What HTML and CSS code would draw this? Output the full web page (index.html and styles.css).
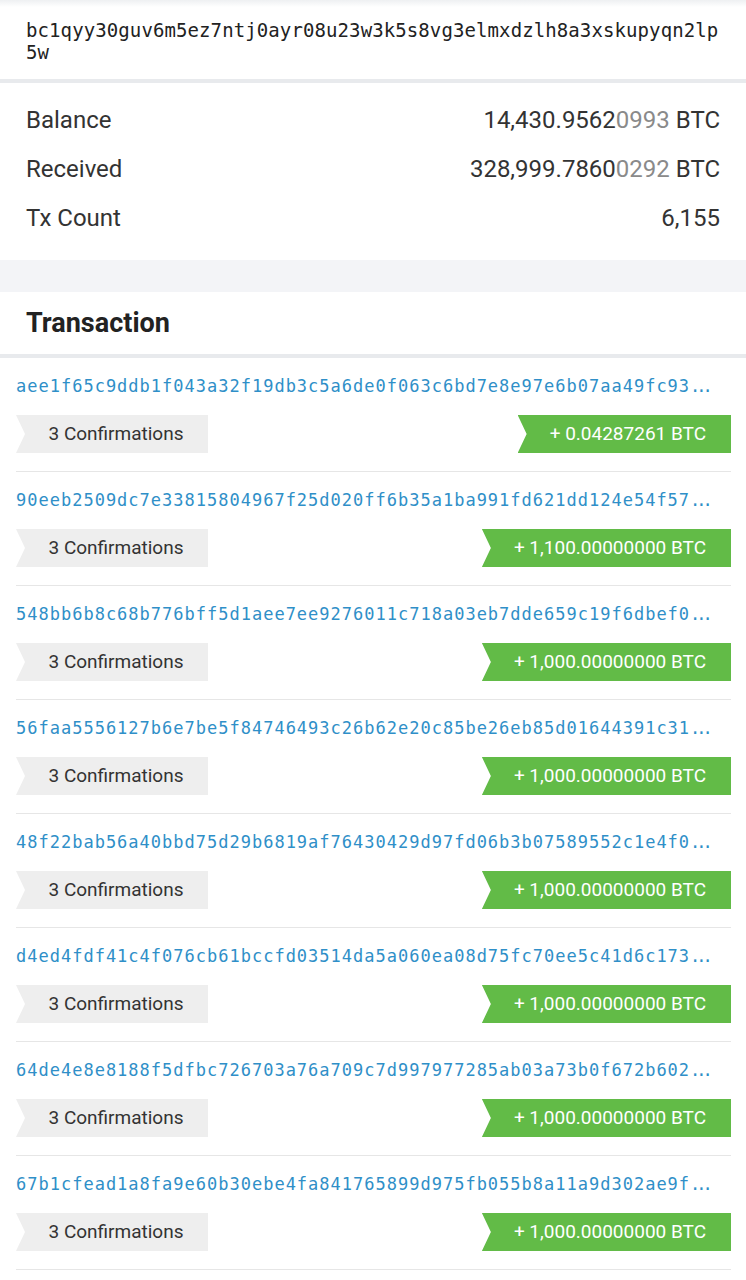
FILE: index.html
```html
<!DOCTYPE html>
<html lang="en">
<head>
  <meta charset="UTF-8">
  <meta name="viewport" content="width=device-width, initial-scale=1.0">
  <title>Address</title>
  <link rel="stylesheet" href="styles.css">
</head>
<body>

  <div class="address-box">
    <div class="address">bc1qyy30guv6m5ez7ntj0ayr08u23w3k5s8vg3elmxdzlh8a3xskupyqn2lp5w</div>
  </div>

  <div class="stats">
    <div class="stat-row">
      <span>Balance</span>
      <span>14,430.9562<span class="faint">0993</span> BTC</span>
    </div>
    <div class="stat-row">
      <span>Received</span>
      <span>328,999.7860<span class="faint">0292</span> BTC</span>
    </div>
    <div class="stat-row">
      <span>Tx Count</span>
      <span>6,155</span>
    </div>
  </div>

  <div class="section-gap"></div>

  <h2 class="section-title">Transaction</h2>

  <ul class="tx-list">
    <li class="tx-item">
      <div class="tx-hash">aee1f65c9ddb1f043a32f19db3c5a6de0f063c6bd7e8e97e6b07aa49fc93<span class="dots">...</span></div>
      <div class="tx-tags">
        <span class="tag tag-conf">3 Confirmations</span>
        <span class="tag tag-amount">+ 0.04287261 BTC</span>
      </div>
    </li>
    <li class="tx-item">
      <div class="tx-hash">90eeb2509dc7e33815804967f25d020ff6b35a1ba991fd621dd124e54f57<span class="dots">...</span></div>
      <div class="tx-tags">
        <span class="tag tag-conf">3 Confirmations</span>
        <span class="tag tag-amount">+ 1,100.00000000 BTC</span>
      </div>
    </li>
    <li class="tx-item">
      <div class="tx-hash">548bb6b8c68b776bff5d1aee7ee9276011c718a03eb7dde659c19f6dbef0<span class="dots">...</span></div>
      <div class="tx-tags">
        <span class="tag tag-conf">3 Confirmations</span>
        <span class="tag tag-amount">+ 1,000.00000000 BTC</span>
      </div>
    </li>
    <li class="tx-item">
      <div class="tx-hash">56faa5556127b6e7be5f84746493c26b62e20c85be26eb85d01644391c31<span class="dots">...</span></div>
      <div class="tx-tags">
        <span class="tag tag-conf">3 Confirmations</span>
        <span class="tag tag-amount">+ 1,000.00000000 BTC</span>
      </div>
    </li>
    <li class="tx-item">
      <div class="tx-hash">48f22bab56a40bbd75d29b6819af76430429d97fd06b3b07589552c1e4f0<span class="dots">...</span></div>
      <div class="tx-tags">
        <span class="tag tag-conf">3 Confirmations</span>
        <span class="tag tag-amount">+ 1,000.00000000 BTC</span>
      </div>
    </li>
    <li class="tx-item">
      <div class="tx-hash">d4ed4fdf41c4f076cb61bccfd03514da5a060ea08d75fc70ee5c41d6c173<span class="dots">...</span></div>
      <div class="tx-tags">
        <span class="tag tag-conf">3 Confirmations</span>
        <span class="tag tag-amount">+ 1,000.00000000 BTC</span>
      </div>
    </li>
    <li class="tx-item">
      <div class="tx-hash">64de4e8e8188f5dfbc726703a76a709c7d997977285ab03a73b0f672b602<span class="dots">...</span></div>
      <div class="tx-tags">
        <span class="tag tag-conf">3 Confirmations</span>
        <span class="tag tag-amount">+ 1,000.00000000 BTC</span>
      </div>
    </li>
    <li class="tx-item">
      <div class="tx-hash">67b1cfead1a8fa9e60b30ebe4fa841765899d975fb055b8a11a9d302ae9f<span class="dots">...</span></div>
      <div class="tx-tags">
        <span class="tag tag-conf">3 Confirmations</span>
        <span class="tag tag-amount">+ 1,000.00000000 BTC</span>
      </div>
    </li>
  </ul>

</body>
</html>
```

FILE: styles.css
```css
body {
  font-family: Roboto, "Liberation Sans", sans-serif;
  background-color: #fff;
  color: #333;
  margin: 0;
  padding: 0;
}

.address-box {
  background: linear-gradient(#eef0f2, #fff 7px);
  padding: 19px 26px 16px;
  border-bottom: 4px solid #e8eaed;
}

.address {
  font-family: "DejaVu Sans Mono", monospace;
  font-size: 19px;
  letter-spacing: 0.1px;
  line-height: 22px;
  color: #222;
  word-break: break-all;
}

.stats {
  padding: 13px 26px 17px;
}

.stat-row {
  display: flex;
  justify-content: space-between;
  font-size: 24px;
  line-height: 49px;
  color: #333;
}

.faint {
  color: #8a8a8a;
}

.section-gap {
  height: 32px;
  background-color: #f3f4f7;
}

.section-title {
  margin: 0;
  padding: 0 26px;
  height: 62px;
  line-height: 62px;
  font-size: 27px;
  font-weight: 700;
  color: #222;
  border-bottom: 4px solid #e8eaed;
}

.tx-list {
  list-style-type: none;
  margin: 0;
  padding: 0 15px 0 16px;
}

.tx-item {
  padding: 16px 0 18px;
  border-bottom: 1px solid #e6e6e6;
}

.tx-hash {
  font-family: "DejaVu Sans Mono", monospace;
  font-size: 17px;
  letter-spacing: 1px;
  line-height: 24px;
  color: #2f8fc8;
  white-space: nowrap;
}

.dots {
  letter-spacing: -4px;
}

.tx-tags {
  display: flex;
  justify-content: space-between;
  margin-top: 17px;
}

.tag {
  height: 38px;
  line-height: 38px;
  font-size: 19px;
  clip-path: polygon(0 0, 100% 0, 100% 100%, 0 100%, 9px 50%);
}

.tag-conf {
  box-sizing: border-box;
  width: 192px;
  padding-left: 8px;
  text-align: center;
  background-color: #eeeeee;
  color: #333;
}

.tag-amount {
  padding: 0 25px 0 32px;
  background-color: #62bb47;
  color: #fff;
}
```
